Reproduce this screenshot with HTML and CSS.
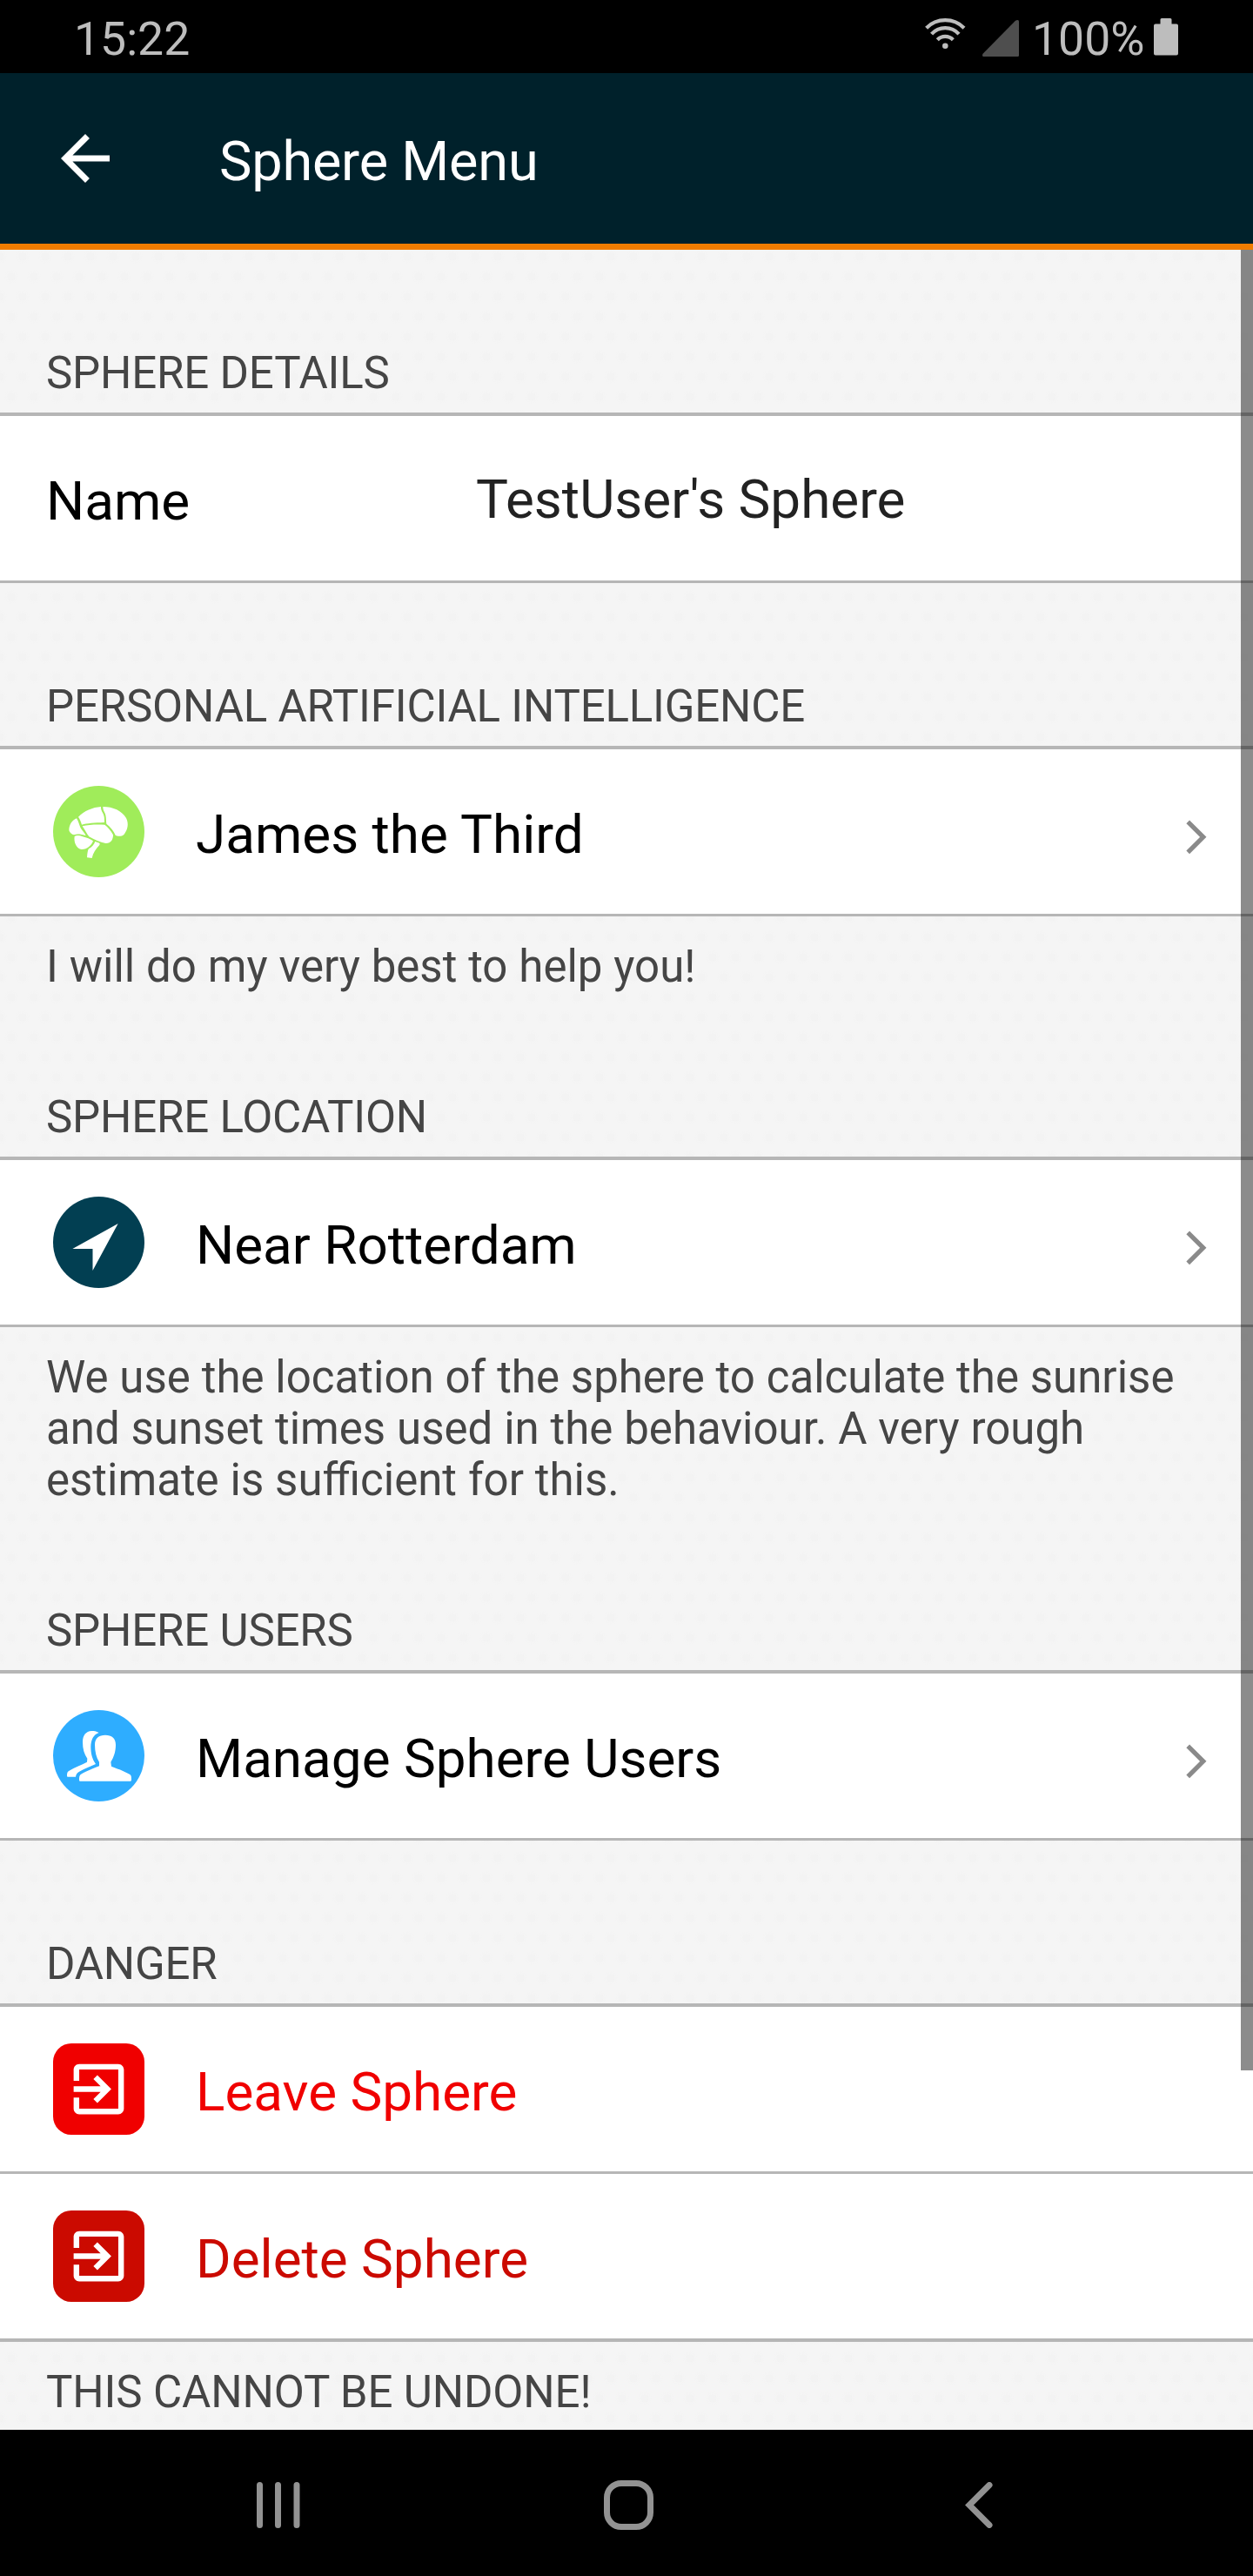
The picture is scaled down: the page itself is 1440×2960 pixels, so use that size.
FILE: index.html
```html
<!DOCTYPE html>
<html lang="en">
<head>
<meta charset="utf-8">
<title>Sphere Menu</title>
<link rel="stylesheet" href="styles.css">
</head>
<body>
<svg class="defs" width="0" height="0" aria-hidden="true">
  <symbol id="chevron" viewBox="0 0 26 42"><path d="M3.2 3.3 20.8 20.8 3.2 38.4" fill="none" stroke="#8a8a8a" stroke-width="5.2"/></symbol>
  <symbol id="exit" viewBox="0 0 24 24"><path fill="#fff" d="M10.09 15.59L11.5 17l5-5-5-5-1.41 1.41L12.67 11H3v2h9.67l-2.58 2.59zM19 3H5c-1.11 0-2 .9-2 2v4h2V5h14v14H5v-4H3v4c0 1.1.89 2 2 2h14c1.1 0 2-.9 2-2V5c0-1.1-.9-2-2-2z"/></symbol>
</svg>

<div class="status">
  <span class="time">15:22</span>
  <svg class="wifi" viewBox="1062 20 50 37" width="50" height="37"><g fill="none" stroke="#bdbdbd" stroke-width="4.2"><path d="M1064.6 32.2A30.7 30.7 0 0 1 1108 32.2"/><path d="M1070.6 39.2A21 21 0 0 1 1102 39.2"/><path d="M1077.3 45.8A12.3 12.3 0 0 1 1095.3 45.8"/></g><circle cx="1086.3" cy="52.7" r="3.3" fill="#bdbdbd"/></svg>
  <svg class="signal" viewBox="0 0 42 42" width="42" height="42"><path fill="#4e4e4e" d="M38 .8Q39.2 0 40.5 0 42 0 42 1.5V40.500Q42 42 40.500 42H1.500Q0 42 0 40.500 0 39.500.8 38.500Z"/></svg>
  <span class="percent">100%</span>
  <svg class="battery" viewBox="0 0 28 43" width="28" height="43"><path fill="#bdbdbd" d="M7.500 6.500V1.500Q7.500 0 9 0H19Q20.500 0 20.500 1.500V6.500H26Q28 6.500 28 8.500V40.500Q28 42.500 26 42.500H2Q0 42.500 0 40.500V8.500Q0 6.500 2 6.500Z"/></svg>
</div>

<header class="bar">
  <svg class="back" viewBox="4 4 16 16" width="56" height="56"><path fill="#fff" d="M20 11H7.830l5.590-5.590L12 4l-8 8 8 8 1.410-1.410L7.830 13H20v-2z"/></svg>
  <h1 class="title">Sphere Menu</h1>
</header>

<main class="content">
  <h2 class="heading">SPHERE DETAILS</h2>
  <div class="row first"><span class="field">Name</span><span class="value">TestUser's Sphere</span></div>

  <h2 class="heading">PERSONAL ARTIFICIAL INTELLIGENCE</h2>
  <div class="row first">
    <svg class="icon" viewBox="63 69 315 315"><circle cx="220.500" cy="226.500" r="157.500" fill="#a0ec5a"/><g fill="#fff"><path d="M235 141C270 141 300 155 315 180C325 200 320 220 308 236C300 244 285 244 278 239C272 225 262 212 247 200C245 185 247 172 240 160C236 152 235 148 235 141Z"/><path d="M228 141C200 143 170 155 150 176C155 183 158 190 162 203C180 198 205 196 240 195C240 180 240 172 234 162C229 154 228 148 228 141Z"/><path d="M144 181C128 188 118 203 118 222C120 230 128 237 135 238C147 234 160 236 176 241C172 230 162 222 157 212C152 200 150 190 144 181Z"/><path d="M164 208C185 202 215 202 241 203C252 212 262 222 270 238C270 255 262 268 244 267C225 264 205 254 187 244C180 236 175 224 164 208Z"/><path d="M137 243C145 238 155 240 165 244C178 247 192 252 201 259C195 275 180 289 160 288C142 284 134 262 137 243Z"/><path d="M208 261L223 266Q225 269 223 273C210 287 201 300 197 318L180 316C181 300 183 290 186 286C197 280 204 272 208 261Z"/></g></svg>
    <span class="label">James the Third</span>
    <svg class="chevron"><use href="#chevron"/></svg>
  </div>
  <p class="note">I will do my very best to help you!</p>

  <h2 class="heading after-note">SPHERE LOCATION</h2>
  <div class="row first">
    <svg class="icon" viewBox="63 75 315 315"><circle cx="220.500" cy="232.500" r="157.500" fill="#023f52"/><path fill="#fff" d="M287 168 199.500 330V255H130Z"/></svg>
    <span class="label">Near Rotterdam</span>
    <svg class="chevron"><use href="#chevron"/></svg>
  </div>
  <p class="note">We use the location of the sphere to calculate the sunrise<br>and sunset times used in the behaviour. A very rough<br>estimate is sufficient for this.</p>

  <h2 class="heading after-note">SPHERE USERS</h2>
  <div class="row first">
    <svg class="icon" viewBox="63 75 315 315"><circle cx="220.500" cy="232.500" r="157.500" fill="#2eadff"/><g fill="#fff"><path d="M243 161C265 161 279 171 279 195C279 218 272 238 262 254L264 269C290 279 315 289 328 297C333 301 333 306 333 315Q333 320.500 330 320.500H156Q153 320.500 153 316C153 308 153 301 158 297C172 287 200 277 222 268V254C212 238 207 218 207 195C207 171 221 161 243 161Z"/><path d="M221 153C212 148 204 147 196 147C176 148 165 162 165 185C165 208 170 226 181 242L180 254C158 265 130 276 116 286C111 290 111 296 111 302Q112 305.500 115 305.500H141C142 297 146 291 152 288C168 278 190 270 210 261C198 245 193 225 193 202C194 176 202 160 221 153Z"/></g></svg>
    <span class="label">Manage Sphere Users</span>
    <svg class="chevron"><use href="#chevron"/></svg>
  </div>

  <h2 class="heading">DANGER</h2>
  <div class="row first leave">
    <span class="icon tile"><svg class="exit"><use href="#exit"/></svg></span>
    <span class="label">Leave Sphere</span>
  </div>
  <div class="row delete">
    <span class="icon tile"><svg class="exit"><use href="#exit"/></svg></span>
    <span class="label">Delete Sphere</span>
  </div>
  <p class="note warning">THIS CANNOT BE UNDONE!</p>
  <div class="scrollbar"></div>
</main>

<nav class="nav">
  <svg viewBox="0 0 50 53" width="50" height="53"><path d="M3.500 3.500V49.500M24.500 3.500V49.500M46 3.500V49.500" stroke="#929292" stroke-width="7" stroke-linecap="round"/></svg>
  <svg class="home" viewBox="0 0 57 57" width="57" height="57"><rect x="3.500" y="3.500" width="50" height="50" rx="16.500" fill="none" stroke="#929292" stroke-width="7"/></svg>
  <svg viewBox="0 0 32 53" width="32" height="53"><path d="M28 3.500 5 26.500 28 49.500" fill="none" stroke="#929292" stroke-width="7" stroke-linecap="round"/></svg>
</nav>
</body>
</html>
```
FILE: styles.css
```css
* { box-sizing: border-box; margin: 0; padding: 0; }
body {
  width: 1440px;
  height: 2960px;
  overflow: hidden;
  display: flex;
  flex-direction: column;
  font-family: Roboto, sans-serif;
  background: #000;
}
.defs { position: absolute; }
svg { display: block; flex: none; }

.status {
  height: 84px;
  flex: none;
  display: flex;
  padding: 0 86px 0 85px;
  color: #bdbdbd;
  font-size: 53.5px;
  line-height: 84px;
}
.time, .percent { padding-top: 3px; }
.time { flex: 1; }
.wifi { margin: 20px 17px 0 0; }
.signal { margin: 23px 15px 0 0; }
.percent { width: 140px; }
.battery { margin-top: 21px; }

.bar {
  height: 203px;
  flex: none;
  display: flex;
  align-items: center;
  padding: 0 70px;
  background: #00212b;
  border-bottom: 7px solid #f07c00;
}
.title {
  margin-left: 126px;
  padding-top: 8px;
  color: #fff;
  font-size: 63px;
  font-weight: 400;
  line-height: 74px;
  letter-spacing: -0.2px;
}

.content {
  position: relative;
  height: 2505px;
  flex: none;
  overflow: hidden;
  background:
    radial-gradient(circle, #f3f3f3 3px, transparent 8px) 0 8px / 26px 46px,
    radial-gradient(circle, #f3f3f3 3px, transparent 8px) 13px 31px / 26px 46px,
    #f5f5f5;
}
.heading {
  height: 187px;
  padding: 112px 53px 16px;
  color: #454545;
  font-size: 51px;
  font-weight: 400;
  line-height: 59px;
  letter-spacing: -0.19px;
}
.heading.after-note { height: 189px; padding-top: 114px; }
.row {
  height: 192px;
  display: flex;
  align-items: center;
  padding: 0 52px 0 61px;
  background: #fff;
  border-bottom: 3px solid #b6b6b6;
  font-size: 62px;
  line-height: 72px;
  color: #000;
}
.row.first { height: 196px; border-top: 4px solid #b6b6b6; }
.field { width: 494px; margin-left: -8px; padding-top: 6px; }
.value { color: #222; padding-top: 2px; }
.icon { width: 105px; height: 105px; flex: none; }
.label { flex: 1; margin-left: 59px; padding-top: 6px; }
.chevron { width: 26px; height: 42px; margin-top: 12px; }
.tile {
  display: flex;
  align-items: center;
  justify-content: center;
  border-radius: 21px;
}
.exit { width: 77px; height: 77px; }
.leave { color: #f00000; }
.leave .tile { background: #f00000; }
.delete { color: #cb0a00; border-bottom-width: 4px; height: 193px; }
.delete .tile { background: #cb0a00; }
.note {
  padding: 28px 53px 0;
  color: #454545;
  font-size: 51px;
  line-height: 59px;
  word-spacing: 0.2px;
}
.note.warning { letter-spacing: -0.13px; word-spacing: 0; }
.scrollbar {
  position: absolute;
  top: 0;
  right: 0;
  width: 14px;
  height: 2092px;
  background: rgba(0, 0, 0, 0.45);
}

.nav {
  height: 168px;
  flex: none;
  display: flex;
  align-items: center;
  padding: 5px 0 0 295px;
}
.home { margin: 0 358px 0 349px; }
```
